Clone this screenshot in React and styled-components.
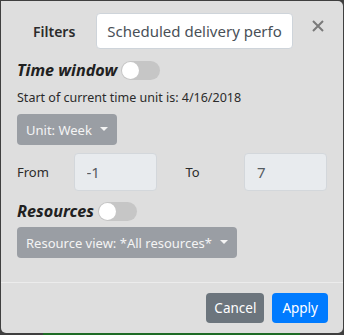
import React from "react";
import styled, { createGlobalStyle } from "styled-components";

const GlobalStyle = createGlobalStyle`
  html, body {
    margin: 0;
    padding: 0;
    background: #3f3f3f;
  }
  body {
    font-family: "Noto Sans", "Open Sans", sans-serif;
    color: #212529;
  }
`;

const Page = styled.div`
  width: 344px;
  height: 335px;
  overflow: hidden;
`;

const Modal = styled.div`
  margin: 1px 1px 0 1px;
  width: 342px;
  height: 332px;
  background: #dedede;
  border-radius: 0 5px 5px 5px;
  display: flex;
  flex-direction: column;
  box-sizing: border-box;
`;

const Underlay = styled.div`
  margin-left: 43px;
  width: 257px;
  height: 2px;
  background: #1e6b25;
`;

const Header = styled.div`
  display: flex;
  align-items: center;
  padding: 11px 18px 0 32px;
  height: 38px;
`;

const Title = styled.div`
  font-size: 14px;
  font-weight: 600;
  color: #2b2b2b;
  margin-right: 21px;
`;

const NameInput = styled.input`
  width: 197px;
  height: 36px;
  box-sizing: border-box;
  border: 1px solid #ced4da;
  border-radius: 4px;
  background: #fff;
  padding: 0 10px;
  font-family: inherit;
  font-size: 15px;
  color: #495057;
  outline: none;
`;

const Close = styled.button`
  margin-left: auto;
  border: none;
  background: none;
  padding: 0;
  width: 14px;
  height: 14px;
  display: flex;
  align-items: center;
  justify-content: center;
  margin-top: -10px;
`;

const Body = styled.div`
  padding: 9px 16px 0 16px;
  display: flex;
  flex-direction: column;
  flex: 1;
`;

const SectionRow = styled.div`
  display: flex;
  align-items: center;
  gap: 4px;
  height: 22px;
`;

const SectionTitle = styled.div`
  font-size: 16.2px;
  font-weight: 700;
  font-style: italic;
  color: #212121;
`;

const Toggle = styled.div`
  width: 39px;
  height: 19px;
  border-radius: 10px;
  background: #c6c6c6;
  position: relative;
  &::after {
    content: "";
    position: absolute;
    left: 1px;
    top: 1px;
    width: 17px;
    height: 17px;
    border-radius: 50%;
    background: #fff;
  }
`;

const Note = styled.div`
  font-size: 12.5px;
  color: #2b2b2b;
  margin-top: 8px;
`;

const DropButton = styled.div`
  display: inline-flex;
  align-self: flex-start;
  align-items: center;
  gap: 8px;
  height: 31px;
  box-sizing: border-box;
  padding: 0 9px;
  border-radius: 4px;
  background: #9a9ea4;
  color: #f4f4f4;
  font-size: 13px;
  margin-top: ${(p) => p.mt || 0}px;
  &::after {
    content: "";
    border-left: 4px solid transparent;
    border-right: 4px solid transparent;
    border-top: 4.5px solid #f4f4f4;
    margin-top: -2px;
  }
`;

const RangeRow = styled.div`
  display: flex;
  align-items: center;
  margin-top: 8px;
  margin-bottom: 9px;
`;

const RangeLabel = styled.div`
  font-size: 13px;
  color: #2b2b2b;
  width: ${(p) => p.w}px;
  padding-left: ${(p) => p.pl || 0}px;
  box-sizing: border-box;
  margin-top: -1px;
`;

const RangeInput = styled.input`
  width: 83px;
  height: 38px;
  box-sizing: border-box;
  border: 1px solid #d3d7db;
  border-radius: 4px;
  background: #e8ebee;
  padding: 0 12px;
  font-family: inherit;
  font-size: 15px;
  color: #555b61;
  outline: none;
`;

const Footer = styled.div`
  border-top: 1px solid #ececec;
  display: flex;
  justify-content: flex-end;
  gap: 8px;
  padding: 10px 15px 0 0;
  height: 51px;
  box-sizing: border-box;
`;

const Button = styled.button`
  height: 30px;
  padding: 0 ${(p) => (p.primary ? 10 : 8)}px;
  border: none;
  border-radius: 4px;
  font-family: inherit;
  font-size: 13.5px;
  color: #fff;
  background: ${(p) => (p.primary ? "#007bff" : "#6c757d")};
`;

export default function App() {
  return (
    <Page>
      <GlobalStyle />
      <Modal>
        <Header>
          <Title>Filters</Title>
          <NameInput readOnly value="Scheduled delivery performance" />
          <Close aria-label="Close">
            <svg width="12" height="12" viewBox="0 0 12 12">
              <path d="M1 1L11 11M11 1L1 11" stroke="#7a7a7a" strokeWidth="2" />
            </svg>
          </Close>
        </Header>
        <Body>
          <SectionRow>
            <SectionTitle>Time window</SectionTitle>
            <Toggle />
          </SectionRow>
          <Note>Start of current time unit is: 4/16/2018</Note>
          <DropButton mt={8}>Unit: Week</DropButton>
          <RangeRow>
            <RangeLabel w={57}>From</RangeLabel>
            <RangeInput readOnly value="-1" />
            <RangeLabel w={88} pl={29}>To</RangeLabel>
            <RangeInput readOnly value="7" />
          </RangeRow>
          <SectionRow>
            <SectionTitle>Resources</SectionTitle>
            <Toggle />
          </SectionRow>
          <DropButton mt={5}>Resource view: *All resources*</DropButton>
        </Body>
        <Footer>
          <Button>Cancel</Button>
          <Button primary>Apply</Button>
        </Footer>
      </Modal>
      <Underlay />
    </Page>
  );
}
